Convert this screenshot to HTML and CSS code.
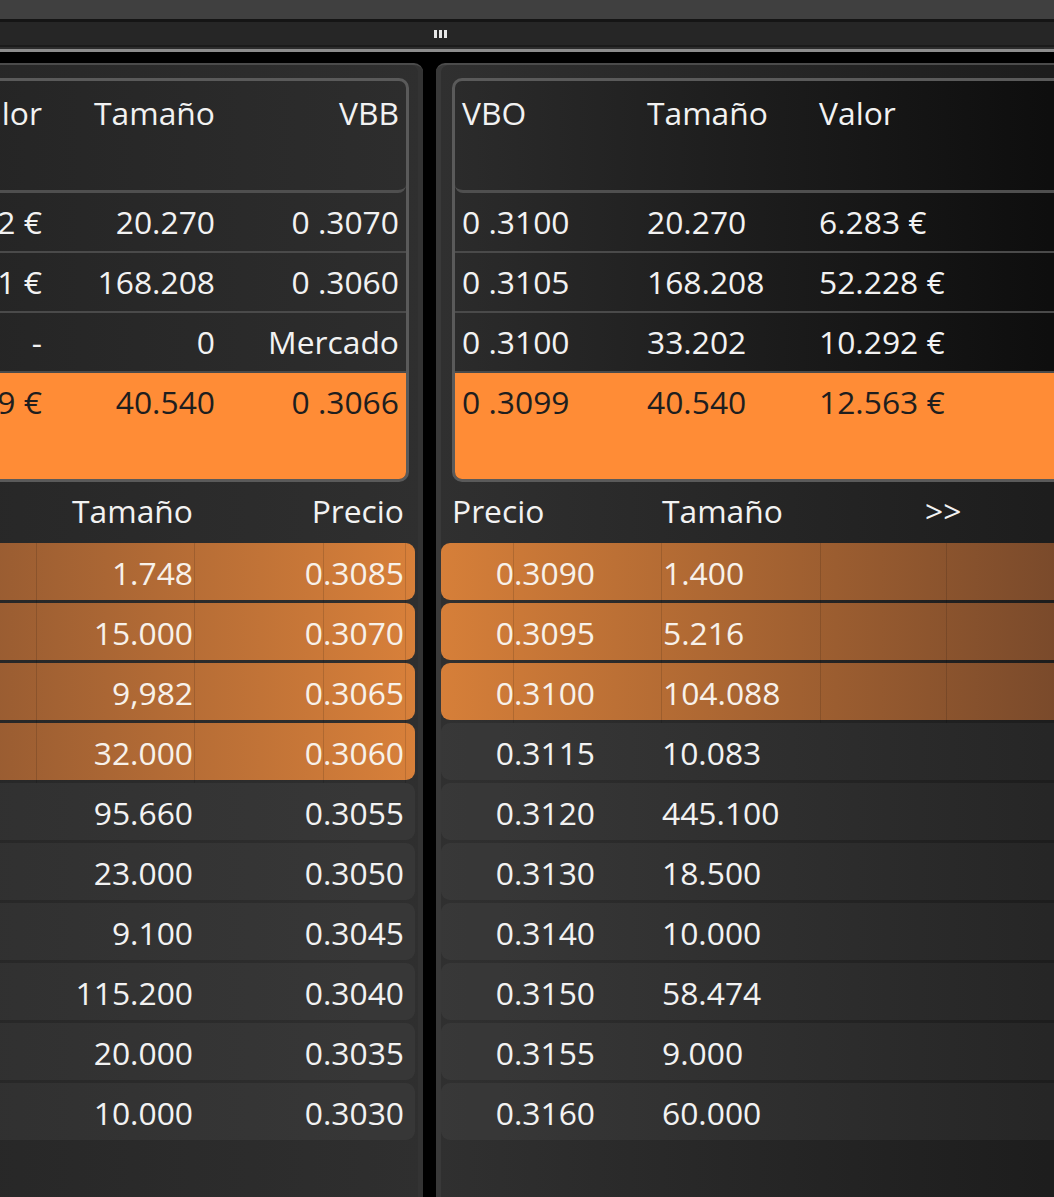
FILE: index.html
```html
<!DOCTYPE html>
<html lang="es">
<head>
    <meta charset="UTF-8">
    <meta name="viewport" content="width=device-width, initial-scale=1.0">
    <title>Profundidad de mercado</title>
    <link rel="stylesheet" href="styles.css">
</head>
<body>
    <div class="toolbar"></div>
    <div class="splitter"><span class="grip"><i></i><i></i><i></i></span></div>
    <div class="rule"></div>

    <main class="panels">
        <!-- compras -->
        <section class="panel bid">
            <div class="quote">
                <div class="q-row q-head"><span>Valor</span><span>Tamaño</span><span>VBB</span></div>
                <div class="q-row"><span>6.222 €</span><span>20.270</span><span>0 .3070</span></div>
                <div class="q-row"><span>51.471 €</span><span>168.208</span><span>0 .3060</span></div>
                <div class="q-row"><span>-</span><span>0</span><span>Mercado</span></div>
                <div class="q-row own"><span>12.429 €</span><span>40.540</span><span>0 .3066</span></div>
            </div>

            <div class="book">
                <div class="b-head"><span></span><span>Tamaño</span><span></span><span>Precio</span><span></span></div>
                <div class="b-row hot"><span></span><span>1.748</span><span></span><span>0.3085</span><span></span></div>
                <div class="b-row hot"><span></span><span>15.000</span><span></span><span>0.3070</span><span></span></div>
                <div class="b-row hot"><span></span><span>9,982</span><span></span><span>0.3065</span><span></span></div>
                <div class="b-row hot"><span></span><span>32.000</span><span></span><span>0.3060</span><span></span></div>
                <div class="b-row"><span></span><span>95.660</span><span></span><span>0.3055</span><span></span></div>
                <div class="b-row"><span></span><span>23.000</span><span></span><span>0.3050</span><span></span></div>
                <div class="b-row"><span></span><span>9.100</span><span></span><span>0.3045</span><span></span></div>
                <div class="b-row"><span></span><span>115.200</span><span></span><span>0.3040</span><span></span></div>
                <div class="b-row"><span></span><span>20.000</span><span></span><span>0.3035</span><span></span></div>
                <div class="b-row"><span></span><span>10.000</span><span></span><span>0.3030</span><span></span></div>
            </div>
        </section>

        <!-- ventas -->
        <section class="panel ask">
            <div class="quote">
                <div class="q-row q-head"><span>VBO</span><span>Tamaño</span><span>Valor</span></div>
                <div class="q-row"><span>0 .3100</span><span>20.270</span><span>6.283 €</span></div>
                <div class="q-row"><span>0 .3105</span><span>168.208</span><span>52.228 €</span></div>
                <div class="q-row"><span>0 .3100</span><span>33.202</span><span>10.292 €</span></div>
                <div class="q-row own"><span>0 .3099</span><span>40.540</span><span>12.563 €</span></div>
            </div>

            <div class="book">
                <div class="b-head"><span>Precio</span><span>Tamaño</span><span class="more">&gt;&gt;</span></div>
                <div class="b-row hot"><span></span><span>0.3090</span><span>1.400</span><span></span><span></span></div>
                <div class="b-row hot"><span></span><span>0.3095</span><span>5.216</span><span></span><span></span></div>
                <div class="b-row hot"><span></span><span>0.3100</span><span>104.088</span><span></span><span></span></div>
                <div class="b-row"><span></span><span>0.3115</span><span>10.083</span><span></span><span></span></div>
                <div class="b-row"><span></span><span>0.3120</span><span>445.100</span><span></span><span></span></div>
                <div class="b-row"><span></span><span>0.3130</span><span>18.500</span><span></span><span></span></div>
                <div class="b-row"><span></span><span>0.3140</span><span>10.000</span><span></span><span></span></div>
                <div class="b-row"><span></span><span>0.3150</span><span>58.474</span><span></span><span></span></div>
                <div class="b-row"><span></span><span>0.3155</span><span>9.000</span><span></span><span></span></div>
                <div class="b-row"><span></span><span>0.3160</span><span>60.000</span><span></span><span></span></div>
            </div>
        </section>
    </main>
</body>
</html>
```

FILE: styles.css
```css
body {
    margin: 0;
    width: 1054px;
    height: 1197px;
    overflow: hidden;
    background: #000;
    color: #f2f2f2;
    font-family: "Open Sans", "Noto Sans", sans-serif;
    font-size: 31.8px;
}

/* barra superior + divisor */
.toolbar {
    height: 19px;
    background: #404040;
}
.splitter {
    height: 23px;
    background: #262626;
    border-top: 3px solid #151515;
    border-bottom: 2px solid #1b1b1b;
    display: flex;
    align-items: center;
    padding-left: 434px;
}
.grip {
    display: flex;
    gap: 2px;
    height: 8px;
}
.grip i {
    width: 3px;
    background: #e6e6e6;
}
.rule {
    height: 2px;
    background: #2d2d2d;
    border-bottom: 3px solid #8c8c8c;
    margin-bottom: 11px;
}

/* paneles */
.panels {
    display: flex;
    gap: 13px;
}
.panel {
    flex: none;
    height: 1119px;
    padding-top: 13px;
    border-top: 2px solid #4b4b4b;
    border-radius: 9px 9px 0 0;
}
.bid {
    width: 520px;
    margin-left: -97px;
    background: linear-gradient(to right, #262626, #2f2f2f);
    box-shadow: inset -5px 0 #333;
}
.ask {
    width: 720px;
    background: linear-gradient(to right, #303030, #1d1d1d 85%);
    box-shadow: inset 5px 0 #393939;
}

/* cuadro de cotizacion */
.quote {
    border: 3px solid #5a5a5a;
    border-radius: 10px;
    overflow: hidden;
}
.bid .quote {
    margin: 0 14px 0 15px;
    background: linear-gradient(to right, #242424, #2d2d2d);
}
.ask .quote {
    margin-left: 16px;
    background: linear-gradient(to right, #2b2b2b, #0e0e0e 85%);
}
.q-row {
    display: grid;
    height: 58px;
    line-height: 58px;
    border-bottom: 2px solid #4a4a4a;
}
.bid .q-row {
    grid-template-columns: 128px 173px 1fr;
}
.ask .q-row {
    grid-template-columns: 185px 172px 1fr;
}
.q-row span {
    padding: 0 7px;
    white-space: nowrap;
}
.bid .q-row span {
    display: flex;
    justify-content: flex-end;
}
.q-head {
    height: 98px;
    padding-top: 11px;
    line-height: 42px;
    border-bottom: 3px solid #4f4f4f;
    border-radius: 0 0 8px 8px;
}
.q-row.own {
    height: 106px;
    border-bottom: 0;
    background: #ff8c36;
    color: #1e1e1e;
}

/* libro de ordenes */
.bid .book {
    margin-right: 8px;
}
.ask .book {
    margin-left: 5px;
}
.b-head,
.b-row {
    display: grid;
    white-space: nowrap;
}
.bid .b-head,
.bid .b-row {
    grid-template-columns: 133px 158px 129px 82px 10px;
}
.ask .b-head,
.ask .b-row {
    grid-template-columns: 72px 148px 159px 126px 1fr;
}
.b-head {
    height: 53px;
    padding-top: 8px;
    line-height: 42px;
}
.b-row {
    height: 57px;
    line-height: 60px;
    margin-bottom: 3px;
    border-radius: 9px;
    background: rgba(255, 255, 255, 0.045);
}
.bid .b-head span,
.bid .b-row span {
    display: flex;
    justify-content: flex-end;
    padding-right: 1px;
}
.ask .b-row span:nth-child(2) {
    display: flex;
    justify-content: flex-end;
    padding-right: 66px;
}
.ask .b-row span:nth-child(3) {
    padding-left: 1px;
}
.ask .b-head span:first-child {
    grid-column: span 2;
    padding-left: 11px;
}
.ask .b-head span:nth-child(2) {
    padding-left: 1px;
}
.ask .b-head .more {
    grid-column: span 2;
    padding-left: 105px;
}

.b-row.hot {
    color: #f7f1ea;
}
.bid .b-row.hot {
    background: linear-gradient(to right, #8c5530, #d8803a);
}
.ask .b-row.hot {
    background: linear-gradient(to right, #d67f39, #7a4a2b 86%);
}
.hot span + span {
    border-left: 1px solid rgba(0, 0, 0, 0.13);
}
```
